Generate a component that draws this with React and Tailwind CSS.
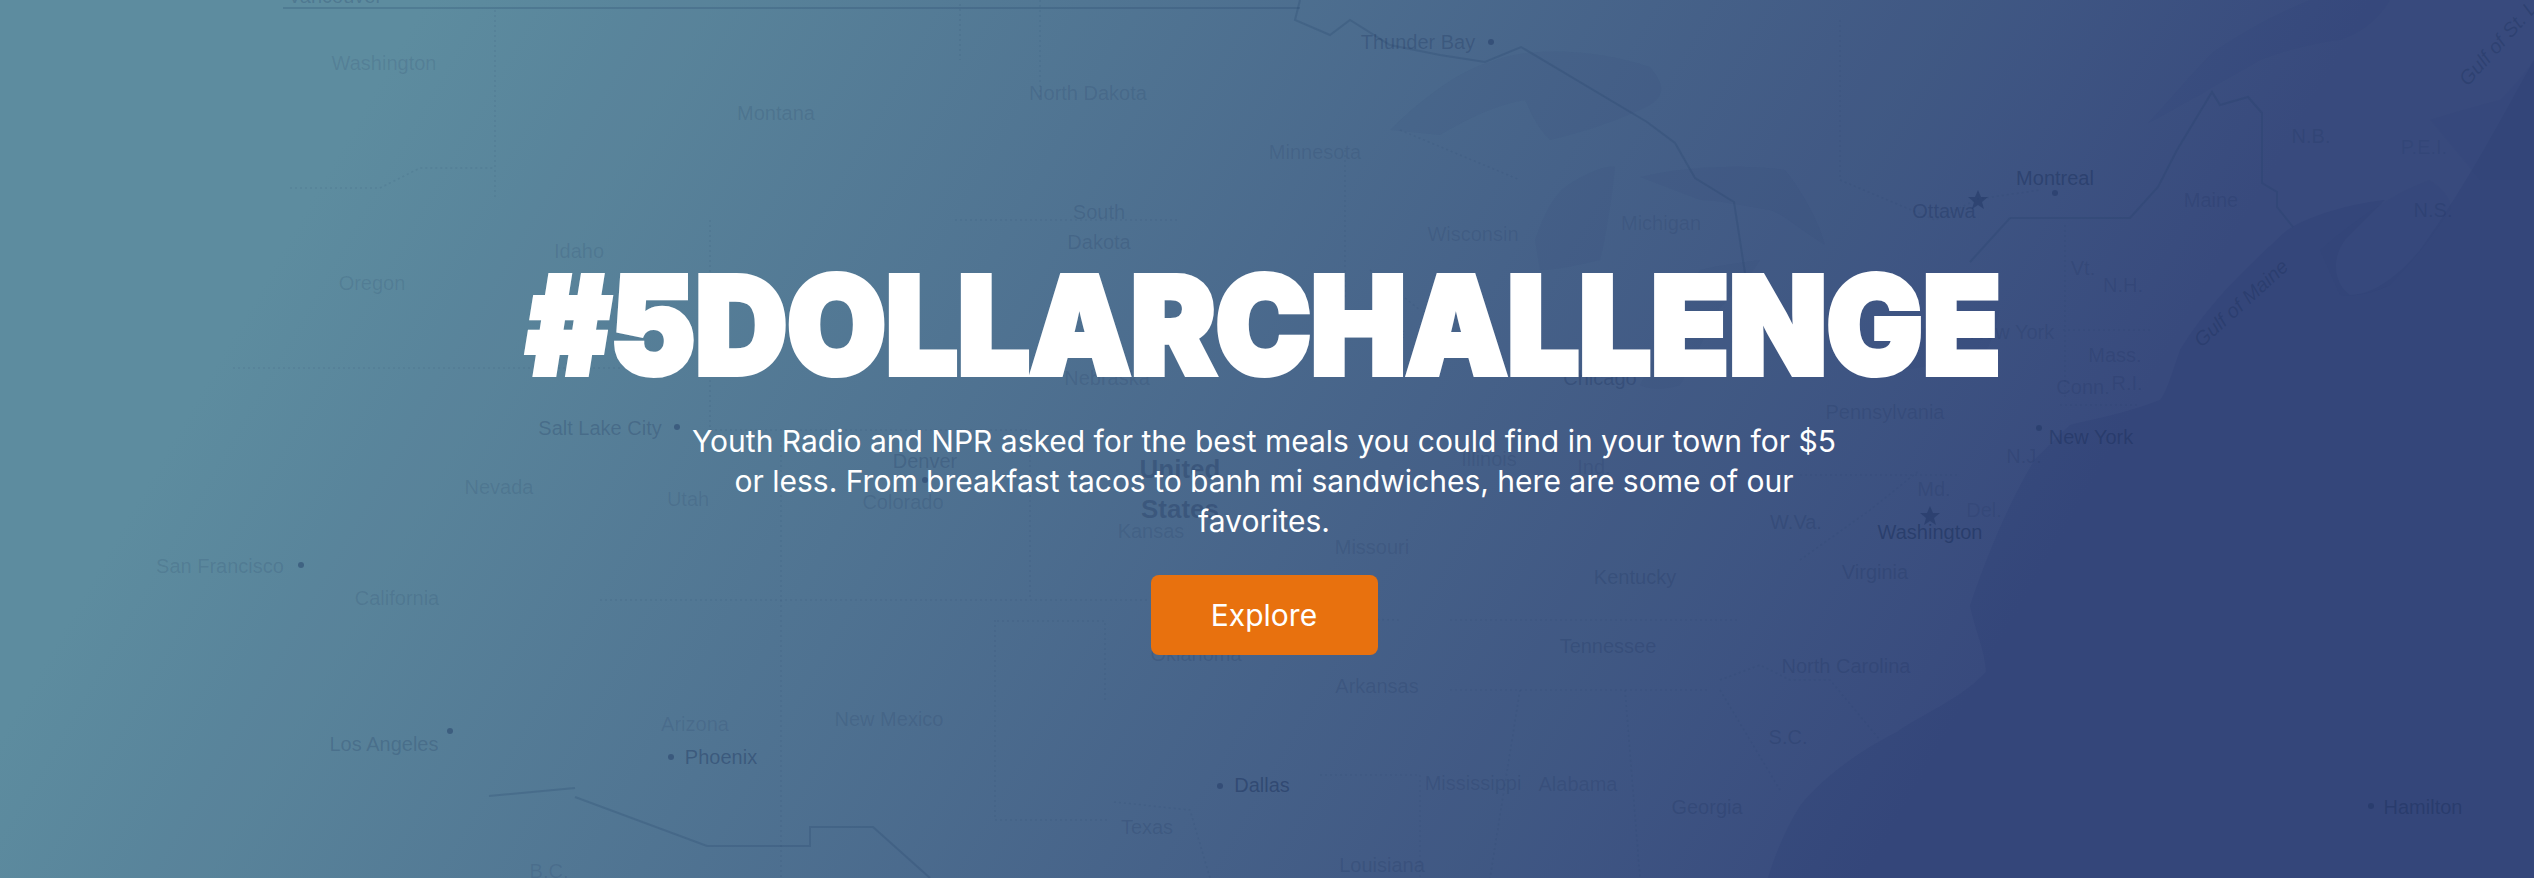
const labels = [
  ["Vancouver", 335, 3, 0.2], ["Washington", 384, 70, 0.12], ["Montana", 776, 120, 0.14], ["North Dakota", 1088, 100, 0.15],
  ["South", 1099, 219, 0.16], ["Dakota", 1099, 249, 0.16], ["Idaho", 579, 258, 0.12], ["Oregon", 372, 290, 0.12],
  ["Nebraska", 1107, 385, 0.15], ["Salt Lake City", 600, 435, 0.22], ["Thunder Bay", 1418, 49, 0.26], ["Minnesota", 1315, 159, 0.12],
  ["Wisconsin", 1473, 241, 0.13], ["Michigan", 1661, 230, 0.13], ["Ottawa", 1944, 218, 0.3], ["Montreal", 2055, 185, 0.4],
  ["Maine", 2211, 207, 0.16], ["N.B.", 2311, 143, 0.18], ["P.E.I.", 2424, 154, 0.12], ["N.S.", 2433, 217, 0.2],
  ["Vt.", 2083, 275, 0.16], ["N.H.", 2123, 292, 0.16], ["New York", 2012, 339, 0.16], ["Mass.", 2115, 362, 0.16],
  ["Conn.", 2083, 394, 0.16], ["R.I.", 2127, 390, 0.16], ["Pennsylvania", 1885, 419, 0.16], ["Chicago", 1600, 385, 0.26],
  ["New York", 2091, 444, 0.38], ["Illinois", 1489, 466, 0.14], ["Ind.", 1594, 474, 0.14], ["N.J.", 2024, 463, 0.16],
  ["Missouri", 1372, 554, 0.15], ["Kentucky", 1635, 584, 0.2], ["W.Va.", 1796, 529, 0.2], ["Md.", 1934, 496, 0.16],
  ["Del.", 1984, 517, 0.12], ["Washington", 1930, 539, 0.45], ["Virginia", 1875, 579, 0.2], ["Tennessee", 1608, 653, 0.2],
  ["North Carolina", 1846, 673, 0.2], ["Arkansas", 1377, 693, 0.16], ["S.C.", 1788, 744, 0.2], ["Mississippi", 1473, 790, 0.16],
  ["Alabama", 1578, 791, 0.16], ["Georgia", 1707, 814, 0.2], ["Louisiana", 1382, 872, 0.18], ["Hamilton", 2423, 814, 0.36],
  ["Dallas", 1262, 792, 0.42], ["Texas", 1147, 834, 0.16], ["Los Angeles", 384, 751, 0.2], ["San Francisco", 220, 573, 0.14],
  ["California", 397, 605, 0.12], ["Nevada", 499, 494, 0.12], ["Utah", 688, 506, 0.12], ["Colorado", 903, 509, 0.14],
  ["Denver", 925, 468, 0.2], ["Kansas", 1151, 538, 0.15], ["Arizona", 695, 731, 0.12], ["Phoenix", 721, 764, 0.35],
  ["New Mexico", 889, 726, 0.14], ["B.C.", 549, 878, 0.12], ["Oklahoma", 1196, 661, 0.16],
];

const dots = [[677, 427], [1491, 42], [2055, 193], [2039, 428], [2371, 806], [1220, 786], [450, 731], [301, 565], [671, 757], [925, 480]];

const solid = [
  "M283 8H1300",
  "M1300 0L1295 20L1330 35L1350 20L1390 45L1440 55L1485 62L1521 47L1647 122L1675 143L1695 178L1734 202L1745 273",
  "M2010 218H2130L2158 187L2177 150L2212 92L2220 105L2248 97L2262 113V183L2277 192V207L2293 227",
  "M2010 218L1970 262",
  "M489 796L575 788M575 797L707 846H810V827H873L930 878",
];

const dashed = [
  "M495 10V200M960 4V60M1040 0V100", "M955 220H1180", "M290 188H380L420 168H495", "M233 368H620",
  "M710 220V430M710 430H1030M1030 430V600", "M600 600H1150M997 621H1105V700", "M781 440V878M995 620V820H1110",
  "M1114 802L1190 810L1210 878",
  "M1450 620H1740M1267 617L1400 620",
  "M1450 690H1710M1720 680L1760 665L1790 680H1830L1880 740",
  "M1320 775H1420V878M1520 690L1490 878M1625 690L1640 878M1720 690L1780 790",
  "M1800 475H1960M1800 560L1870 510L1920 470",
  "M2065 225V400M2150 330H2060M2060 405H2140",
  "M1345 150V300M1400 130L1520 180M1370 270L1420 310",
  "M1840 20V180L1935 220L1978 199L2040 190",
];

const land = "M0 0H2534V60C2500 120 2470 180 2420 250C2395 280 2370 295 2350 295C2335 285 2330 260 2345 240L2385 200C2340 205 2300 220 2285 232C2255 260 2210 300 2180 350C2170 380 2165 395 2160 400C2120 415 2090 420 2070 425L2035 459C2010 500 1985 560 1970 606C1975 630 1985 650 1986 672C1960 700 1920 715 1897 732C1860 750 1820 780 1800 806C1785 830 1775 855 1768 878H0Z";

const lakes = [
  "M1390 130C1420 100 1460 70 1490 62C1530 45 1600 50 1650 67C1665 85 1665 95 1650 105C1610 125 1570 135 1550 140C1535 125 1530 110 1525 100C1495 105 1465 120 1440 135Z",
  "M1535 240C1545 210 1555 195 1565 187C1590 170 1610 165 1615 167C1612 200 1605 240 1600 260C1580 265 1555 270 1540 270Z",
  "M1640 177C1690 165 1750 165 1785 170C1805 195 1820 225 1825 245C1800 230 1785 215 1770 210C1740 205 1715 200 1700 200Z",
  "M1700 270C1720 265 1745 262 1760 260C1745 285 1725 300 1715 315C1700 345 1690 370 1680 385C1665 390 1650 390 1640 385Z",
  "M1920 330C1950 320 1980 312 2000 310C1995 330 1990 345 1985 352C1955 360 1925 368 1900 370Z",
  "M2148 123C2170 100 2190 75 2212 53C2245 30 2280 12 2310 0H2390C2375 25 2355 35 2340 40C2300 45 2275 55 2260 60C2235 75 2215 85 2200 95C2180 105 2160 118 2148 123Z",
  "M2320 250C2360 215 2400 190 2430 180C2445 190 2452 200 2450 210C2430 240 2410 265 2390 285C2370 295 2350 297 2340 295Z",
  "M2430 120C2455 112 2480 105 2500 100C2515 85 2525 72 2534 60V180L2480 180Z",
];

function MapLayer() {
  return (
    <svg className="absolute inset-0" width="2534" height="878" viewBox="0 0 2534 878">
      <path d={land} fill="#ffffff" fillOpacity="0.022" />
      {lakes.map((d, i) => <path key={i} d={d} fill="#1c3a68" fillOpacity="0.055" />)}
      {solid.map((d, i) => <path key={i} d={d} fill="none" stroke="#1e3a64" strokeOpacity="0.2" strokeWidth="2" />)}
      {dashed.map((d, i) => <path key={i} d={d} fill="none" stroke="#1e3a64" strokeOpacity="0.1" strokeWidth="1.5" strokeDasharray="2 3" />)}
      {dots.map(([x, y], i) => <circle key={i} cx={x} cy={y} r="3" fill="#1a2f5c" fillOpacity="0.4" />)}
      <g fontFamily="'Liberation Sans', Arial, sans-serif" fontSize="20" fill="#152a55" textAnchor="middle">
        {labels.map(([t, x, y, o], i) => <text key={i} x={x} y={y} fillOpacity={o}>{t}</text>)}
        <text x="1180" y="478" fontSize="26" fontWeight="700" fillOpacity="0.28">United</text>
        <text x="1180" y="518" fontSize="26" fontWeight="700" fillOpacity="0.28">States</text>
        <text x="2241" y="310" fillOpacity="0.28" fontStyle="italic" transform="rotate(-42 2241 303)">Gulf of Maine</text>
        <text x="2498" y="50" fillOpacity="0.28" fontStyle="italic" transform="rotate(-48 2498 43)">Gulf of St. L</text>
      </g>
      <g fill="#1a2f5c" fillOpacity="0.42">
        <polygon points="1978,190 1981,197 1988,197 1982,202 1984,209 1978,205 1972,209 1974,202 1968,197 1975,197" />
        <polygon points="1930,506 1933,513 1940,513 1934,518 1936,525 1930,521 1924,525 1926,518 1920,513 1927,513" />
      </g>
    </svg>
  );
}

export default function App() {
  return (
    <section className="relative flex h-[878px] w-full flex-col items-center justify-center overflow-hidden bg-[linear-gradient(120deg,#5a8a9d_14%,#34467a_78%)] pr-[6px] pt-[47px] font-['Inter','Noto_Sans',sans-serif] text-white">
      <MapLayer />
      <div className="relative flex flex-col items-center">
        <h1 className="inline-block scale-x-[0.942] whitespace-nowrap font-['Inter',sans-serif] text-[135px] font-black leading-[110px] [-webkit-text-stroke:6px_#fff] [paint-order:stroke_fill] [stroke-linejoin:round]">
          #5DOLLARCHALLENGE
        </h1>
        <p className="mt-[41px] max-w-[1152px] text-center text-[30px] leading-[40px]">
          Youth Radio and NPR asked for the best meals you could find in your town for $5 or less. From breakfast tacos to banh mi sandwiches, here are some of our favorites.
        </p>
        <button className="mt-[34px] flex h-[80px] w-[227px] items-center justify-center rounded-lg bg-[#e8710e] text-[30px] text-white">
          Explore
        </button>
      </div>
    </section>
  );
}
